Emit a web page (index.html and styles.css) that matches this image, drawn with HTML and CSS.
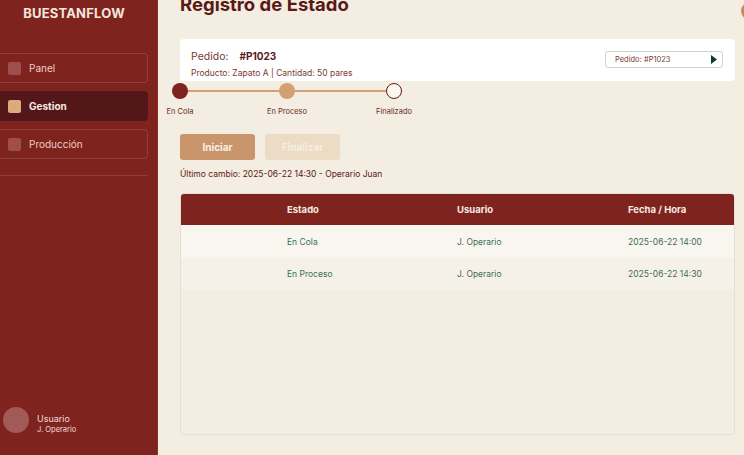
FILE: index.html
```html
<!DOCTYPE html>
<html lang="es">
<head>
<meta charset="utf-8">
<title>Registro de Estado</title>
<link rel="stylesheet" href="styles.css">
</head>
<body>
<div class="app">
  <aside class="sidebar">
    <div class="brand">BUESTANFLOW</div>
    <nav class="nav">
      <a class="nav-item"><span class="nav-icon"></span><span>Panel</span></a>
      <a class="nav-item active"><span class="nav-icon"></span><span>Gestion</span></a>
      <a class="nav-item"><span class="nav-icon"></span><span>Producción</span></a>
    </nav>
    <div class="divider"></div>
    <div class="spacer"></div>
    <div class="user">
      <div class="avatar"></div>
      <div class="user-text">
        <div class="user-role">Usuario</div>
        <div class="user-name">J. Operario</div>
      </div>
    </div>
  </aside>
  <main class="main">
    <header class="header">
      <h1 class="title">Registro de Estado</h1>
      <div class="top-avatar"></div>
    </header>
    <section class="card">
      <div class="card-info">
        <div class="order"><span class="order-label">Pedido:</span><span class="order-id">#P1023</span></div>
        <div class="product">Producto: Zapato A | Cantidad: 50 pares</div>
      </div>
      <div class="select">
        <span>Pedido: #P1023</span>
        <svg class="select-arrow" width="6" height="9" viewBox="0 0 6 9"><path d="M0 0 L6 4.5 L0 9 Z" fill="#0f3b2c"/></svg>
      </div>
    </section>
    <div class="stepper">
      <div class="step"><span class="dot done"></span><span class="step-label">En Cola</span></div>
      <div class="line"></div>
      <div class="step"><span class="dot current"></span><span class="step-label">En Proceso</span></div>
      <div class="line"></div>
      <div class="step"><span class="dot pending"></span><span class="step-label">Finalizado</span></div>
    </div>
    <div class="actions">
      <button class="btn btn-primary">Iniciar</button>
      <button class="btn btn-disabled">Finalizar</button>
    </div>
    <p class="last-change">Último cambio: 2025-06-22 14:30 - Operario Juan</p>
    <section class="table">
      <div class="thead">
        <div></div><div>Estado</div><div>Usuario</div><div>Fecha / Hora</div>
      </div>
      <div class="row odd">
        <div></div><div>En Cola</div><div>J. Operario</div><div>2025-06-22 14:00</div>
      </div>
      <div class="row even">
        <div></div><div>En Proceso</div><div>J. Operario</div><div>2025-06-22 14:30</div>
      </div>
    </section>
  </main>
</div>
</body>
</html>
```
FILE: styles.css
```css
* { box-sizing: border-box; }
html, body { margin: 0; padding: 0; }
body {
  width: 744px;
  height: 455px;
  overflow: hidden;
  background: #f4ede1;
  font-family: "Inter", "Open Sans", sans-serif;
}
.app { display: flex; height: 455px; }

.sidebar {
  width: 158px;
  flex: none;
  background: #7f231f;
  border-right: 1px solid #8c302b;
  display: flex;
  flex-direction: column;
  padding-right: 9px;
}
.brand {
  text-align: center;
  color: #f5e6df;
  font-weight: 700;
  font-size: 13px;
  letter-spacing: 0.2px;
  line-height: 16px;
  margin-top: 5px;
}
.nav {
  display: flex;
  flex-direction: column;
  gap: 8px;
  margin-top: 32px;
  margin-left: -4px;
}
.nav-item {
  display: flex;
  align-items: center;
  gap: 8px;
  height: 30px;
  padding-left: 11px;
  border: 1px solid rgba(255,255,255,0.13);
  border-radius: 4px;
  color: #ebcfc6;
  font-size: 10px;
}
.nav-item.active {
  background: #531719;
  border-color: #531719;
  color: #f7e9e2;
  font-weight: 700;
}
.nav-icon {
  width: 13px;
  height: 13px;
  border-radius: 2px;
  background: #a04e4c;
}
.active .nav-icon { background: #dcaa7c; }
.divider {
  height: 1px;
  background: rgba(255,255,255,0.12);
  margin-top: 16px;
}
.spacer { flex: 1; }
.user {
  display: flex;
  align-items: center;
  gap: 8px;
  padding-left: 3px;
  margin-bottom: 20px;
}
.avatar {
  width: 26px;
  height: 26px;
  border-radius: 50%;
  background: #a35a57;
}
.user-text { margin-top: 9px; }
.user-role { color: #f0ddd6; font-size: 9px; line-height: 11px; }
.user-name { color: #f0ddd6; font-size: 7.5px; line-height: 11px; }

.main {
  flex: 1;
  padding: 0 9px 0 22px;
  display: flex;
  flex-direction: column;
}
.header {
  display: flex;
  justify-content: space-between;
  align-items: flex-start;
  margin-top: -9px;
  height: 27px;
  margin-right: -9px;
}
.title {
  margin: 0;
  font-size: 18.5px;
  line-height: 26px;
  font-weight: 700;
  color: #5a1916;
}
.top-avatar {
  width: 18px;
  height: 18px;
  border-radius: 50%;
  background: #c98a5b;
  margin-top: 11px;
  margin-right: -15px;
}

.card {
  margin-top: 21px;
  height: 42px;
  background: #ffffff;
  border-radius: 4px;
  display: flex;
  justify-content: space-between;
  align-items: flex-start;
  padding: 10px 12px 0 11px;
}
.card-info { display: flex; flex-direction: column; }
.order { font-size: 10.5px; line-height: 14px; color: #7a3a35; }
.order-label { margin-right: 11px; }
.order-id { font-weight: 700; color: #5a1916; font-size: 10px; }
.product { font-size: 8.5px; line-height: 12px; color: #7a3a35; margin-top: 3px; }
.select {
  width: 118px;
  height: 17px;
  border: 1px solid #c7d6cd;
  border-radius: 3px;
  display: flex;
  justify-content: space-between;
  align-items: center;
  padding: 0 5px 0 9px;
  font-size: 7.5px;
  color: #7a3a35;
  margin-top: 2px;
}

.stepper {
  display: flex;
  align-items: flex-start;
  margin-left: -8px;
  margin-top: 2px;
}
.step {
  width: 16px;
  display: flex;
  flex-direction: column;
  align-items: center;
}
.dot {
  width: 16px;
  height: 16px;
  border-radius: 50%;
  flex: none;
}
.dot.done { background: #7f231f; }
.dot.current { background: #d4a073; }
.dot.pending { background: #fbf6ee; border: 1.5px solid #5a1916; }
.step-label {
  white-space: nowrap;
  font-size: 7.5px;
  line-height: 10px;
  color: #6a2b26;
  margin-top: 8px;
}
.line {
  width: 91px;
  height: 2px;
  background: #d4a073;
  margin-top: 7px;
}

.actions {
  display: flex;
  gap: 10px;
  margin-top: 17px;
}
.btn {
  width: 75px;
  height: 26px;
  border: none;
  border-radius: 3px;
  font-family: inherit;
  font-size: 10px;
  font-weight: 700;
  padding: 0;
}
.btn-primary { background: #c9966c; color: #fbf0e6; }
.btn-disabled { background: #ecdbc5; color: #f7eee2; }
.last-change {
  margin: 8px 0 0;
  font-size: 8.5px;
  line-height: 12px;
  color: #5a1916;
}

.table {
  margin-top: 13px;
  height: 242px;
  border: 1px solid #e2e2d4;
  border-radius: 4px;
  overflow: hidden;
}
.thead, .row {
  display: grid;
  grid-template-columns: 106px 170px 171px 1fr;
  align-items: center;
}
.thead {
  height: 32px;
  background: #7f231f;
  color: #f7ebe4;
  font-size: 9.5px;
  font-weight: 700;
  margin: -1px -1px 0;
  padding-left: 1px;
}
.row {
  height: 32px;
  font-size: 8.5px;
  color: #3d6d56;
}
.row.odd { background: #f9f6f0; height: 33px; }
.row.even { background: #f6f1e8; }
```
